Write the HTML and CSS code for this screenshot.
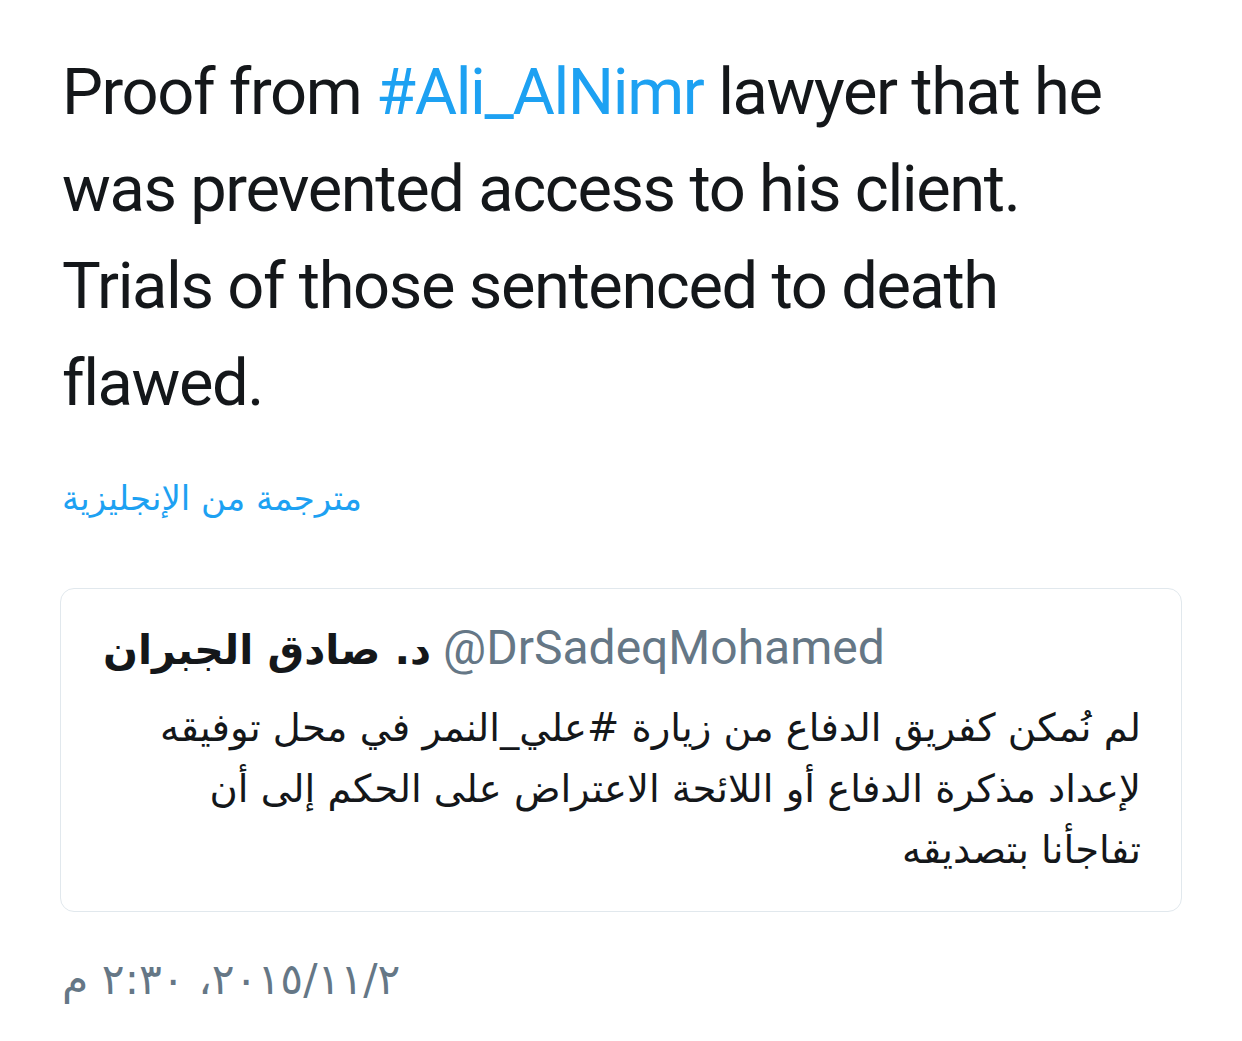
FILE: index.html
```html
<!DOCTYPE html>
<html lang="en">
<head>
<meta charset="utf-8">
<title>Tweet</title>
<link rel="stylesheet" href="styles.css">
</head>
<body>
<main class="tweet">
  <p class="tweet-text">Proof from <span class="link">#Ali_AlNimr</span> lawyer that he<br>was prevented access to his client.<br>Trials of those sentenced to death<br>flawed.</p>
  <div class="translated">مترجمة من الإنجليزية</div>
  <section class="quote">
    <div class="quote-header"><span class="quote-name">د. صادق الجبران</span> <span class="quote-handle">@DrSadeqMohamed</span></div>
    <p class="quote-text" dir="rtl">لم نُمكن كفريق الدفاع من زيارة #علي_النمر في محل توفيقه<br>لإعداد مذكرة الدفاع أو اللائحة الاعتراض على الحكم إلى أن<br>تفاجأنا بتصديقه</p>
  </section>
  <div class="date"><bdo dir="ltr">م ٢:٣٠ ،٢٠١٥/١١/٢</bdo></div>
</main>
</body>
</html>
```
FILE: styles.css
```css
html, body {
  margin: 0;
  padding: 0;
  background: #ffffff;
}
.tweet {
  padding: 44px 60px 0 62px;
  font-family: Roboto, "Liberation Sans", sans-serif;
  color: #14171a;
}
.tweet-text {
  margin: 0;
  font-size: 65px;
  line-height: 97px;
  letter-spacing: -1.4px;
  white-space: nowrap;
}
.link {
  color: #1da1f2;
}
.translated {
  margin-top: 42px;
  font-family: "DejaVu Sans", sans-serif;
  font-size: 34px;
  line-height: 48px;
  color: #1da1f2;
}
.quote {
  margin: 66px 0 0 -2px;
  border: 1px solid #e1e8ed;
  border-radius: 14px;
  padding: 26px 40px 31px 42px;
}
.quote-header {
  font-size: 48px;
  line-height: 66px;
  white-space: nowrap;
}
.quote-name {
  font-family: "DejaVu Sans", sans-serif;
  font-weight: bold;
  font-size: 41px;
  color: #14171a;
}
.quote-handle {
  color: #657786;
}
.quote-text {
  margin: 14px 0 0;
  font-family: "DejaVu Sans", sans-serif;
  font-size: 38.5px;
  line-height: 61px;
  text-align: right;
  color: #14171a;
}
.date {
  margin-top: 37px;
  font-family: "DejaVu Sans", sans-serif;
  font-size: 42.5px;
  line-height: 62px;
  color: #657786;
}
```
